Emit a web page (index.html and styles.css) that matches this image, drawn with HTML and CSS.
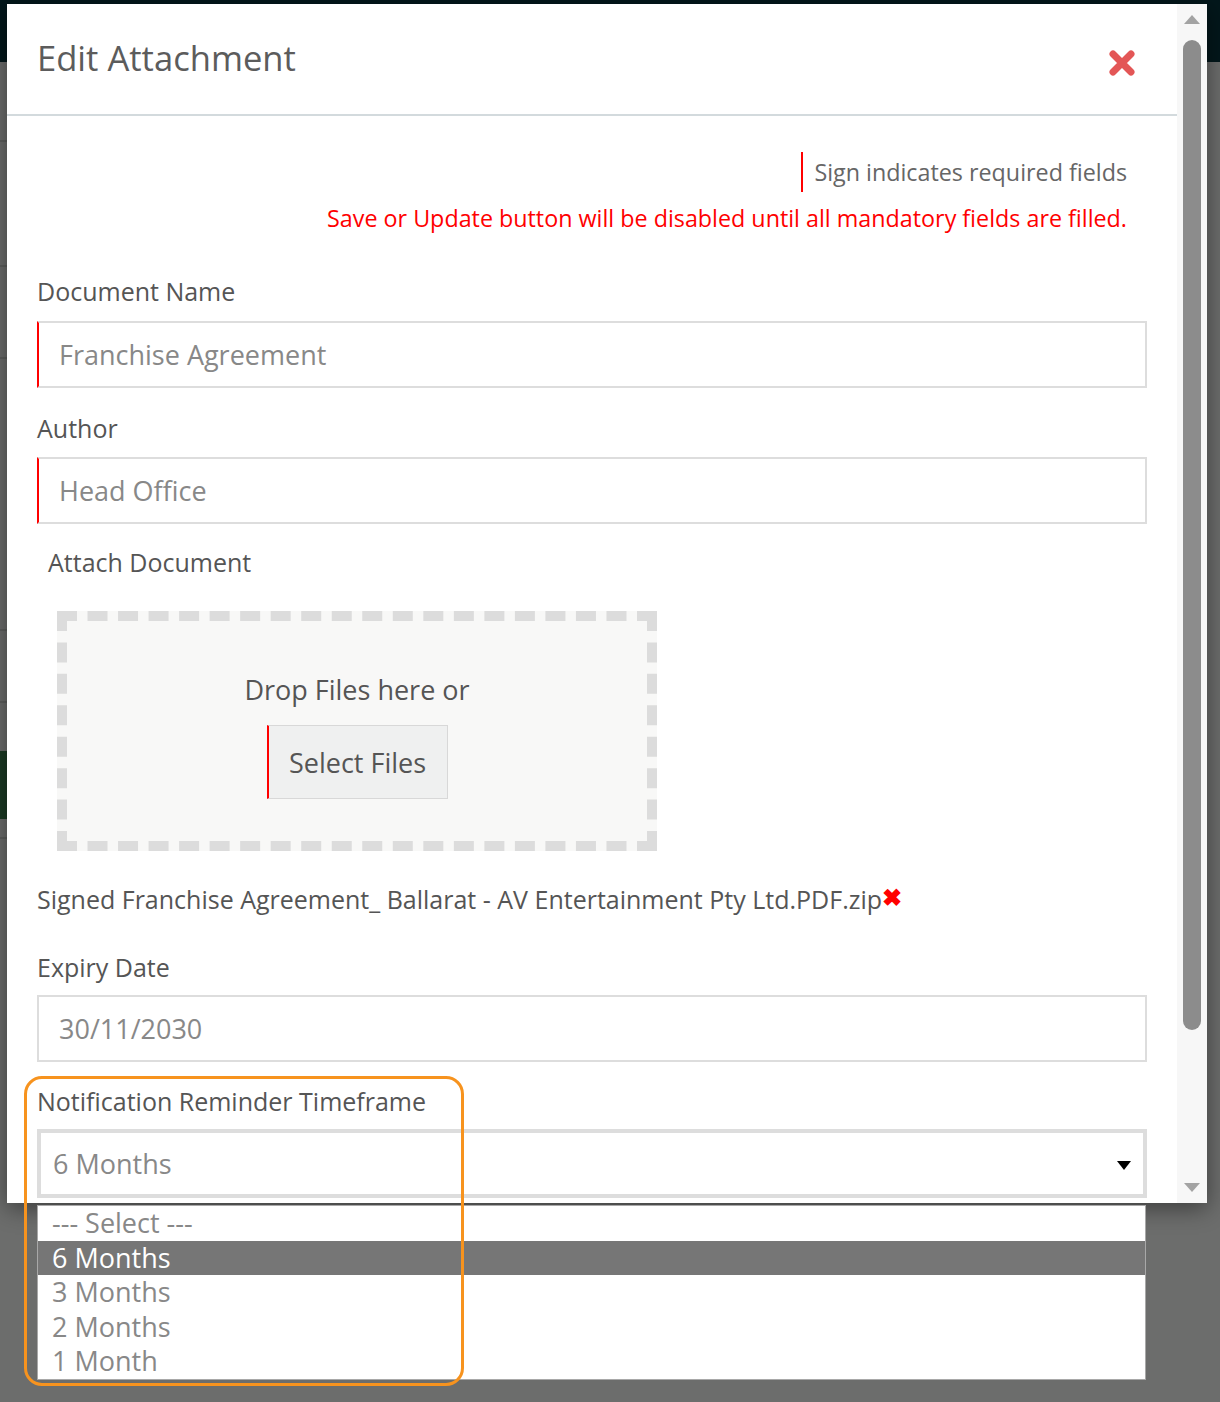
FILE: index.html
```html
<!DOCTYPE html>
<html>

<head>
    <title>Edit Attachment</title>
    <meta charset="utf-8">
    <meta name="viewport" content="width=device-width, initial-scale=1.0">
    <link rel="stylesheet" href="styles.css">
</head>

<body>

    <div class="topbar"></div>
    <div class="bagside">
        <div class="bag-linje l1"></div>
        <div class="bag-linje l2"></div>
        <div class="bag-linje l3"></div>
        <div class="bag-linje l4"></div>
        <div class="bag-linje l5"></div>
        <div class="bag-gron"></div>
        <div class="bag-linje l6"></div>
    </div>

    <div id="modal">
        <div class="modal-main">
            <header class="modal-head">
                <h2>Edit Attachment</h2>
                <button class="luk" aria-label="Close">
                    <svg width="28" height="28" viewBox="0 0 28 28">
                        <path d="M5 5 L23 23 M23 5 L5 23" stroke="#e35656" stroke-width="7" stroke-linecap="round" fill="none" />
                    </svg>
                </button>
            </header>

            <div class="modal-body">
                <div class="notes">
                    <p class="required">Sign indicates required fields</p>
                    <p class="warning">Save or Update button will be disabled until all mandatory fields are filled.</p>
                </div>

                <label class="label first">Document Name</label>
                <input class="input krav" type="text" value="Franchise Agreement">

                <label class="label">Author</label>
                <input class="input krav" type="text" value="Head Office">

                <label class="label attach">Attach Document</label>
                <div class="dropzone">
                    <p class="drop-tekst">Drop Files here or</p>
                    <button class="vaelg">Select Files</button>
                </div>

                <p class="filnavn">Signed Franchise Agreement_ Ballarat - AV Entertainment Pty Ltd.PDF.zip<span class="fjern">&#10006;</span></p>

                <label class="label expiry">Expiry Date</label>
                <input class="input dato" type="text" value="30/11/2030">

                <label class="label notif">Notification Reminder Timeframe</label>
                <div class="vaelger">
                    <span>6 Months</span>
                    <span class="pil"></span>
                </div>
            </div>
        </div>

        <div class="scroll">
            <div class="scroll-op"></div>
            <div class="scroll-thumb"></div>
            <div class="scroll-ned"></div>
        </div>
    </div>

    <ul class="liste">
        <li>--- Select ---</li>
        <li class="valgt">6 Months</li>
        <li>3 Months</li>
        <li>2 Months</li>
        <li>1 Month</li>
    </ul>

    <div class="markering"></div>

</body>

</html>
```

FILE: styles.css
```css
body {
    margin: 0;
    height: 1402px;
    position: relative;
    overflow: hidden;
    background-color: #6c6d6c;
    font-family: "Open Sans", sans-serif;
}

.topbar {
    height: 62px;
    background-color: #03171b;
}

.bagside {
    width: 60px;
}

.bag-linje {
    height: 2px;
    background-color: #5e5f5e;
}

.l1 {
    margin-top: 78px;
}

.l2 {
    margin-top: 123px;
}

.l3 {
    margin-top: 90px;
}

.l4 {
    margin-top: 270px;
}

.l5 {
    margin-top: 70px;
}

.bag-gron {
    height: 68px;
    margin-top: 48px;
    background-color: #1b3a24;
}

.l6 {
    margin-top: 18px;
}

/* modal */

#modal {
    position: absolute;
    left: 7px;
    top: 4px;
    width: 1200px;
    height: 1199px;
    display: flex;
    background-color: #ffffff;
    box-shadow: 0 5px 22px rgba(0, 0, 0, 0.45);
}

.modal-main {
    width: 1170px;
    overflow: hidden;
}

.modal-head {
    height: 110px;
    display: flex;
    align-items: center;
    justify-content: space-between;
    padding: 0 41px 0 30px;
    border-bottom: 2px solid #d3dadd;
}

.modal-head h2 {
    margin: 0 0 4px;
    font-size: 34.6px;
    font-weight: 400;
    color: #5c5c5c;
}

.luk {
    border: none;
    background: none;
    padding: 0;
    margin-top: 8px;
    width: 28px;
    height: 28px;
}

.luk svg {
    display: block;
}

.modal-body {
    padding: 0 30px;
}

.notes {
    text-align: right;
    padding-right: 20px;
    margin-top: 36px;
    font-size: 23.3px;
    line-height: 32px;
}

.notes p {
    margin: 0;
}

.required {
    display: inline-block;
    vertical-align: top;
    border-left: 2px solid #ff0000;
    padding-left: 11px;
    line-height: 40px;
    color: #666666;
}

.notes .warning {
    margin-top: 10px;
    color: #ff0000;
}

.label {
    display: block;
    font-size: 25px;
    line-height: 34px;
    color: #555555;
    margin: 23px 0 12px;
}

.label.first {
    margin-top: 40px;
    margin-bottom: 13px;
}

.input {
    display: block;
    width: 100%;
    height: 67px;
    box-sizing: border-box;
    border: 2px solid #dddddd;
    padding: 0 20px;
    font-family: "Open Sans", sans-serif;
    font-size: 27px;
    color: #888888;
    outline: none;
}

.input.krav {
    border-left-color: #ff0000;
}

.label.attach {
    margin: 21px 0 32px 11px;
}

.dropzone {
    margin-left: 20px;
    width: 600px;
    height: 240px;
    box-sizing: border-box;
    border: 10px dashed #dcdcdc;
    background-color: #f8f8f7;
    text-align: center;
}

.drop-tekst {
    margin: 52px 0 18px;
    font-size: 27px;
    line-height: 34px;
    color: #555555;
}

.vaelg {
    width: 181px;
    height: 74px;
    background-color: #eff0f0;
    border: 1px solid #d8d8d8;
    border-left: 2px solid #ff0000;
    font-family: "Open Sans", sans-serif;
    font-size: 27px;
    color: #555555;
}

.filnavn {
    margin: 29px 0 0;
    font-size: 25px;
    line-height: 34px;
    color: #555555;
}

.fjern {
    color: #ff0000;
    font-size: 24px;
    font-weight: bold;
    vertical-align: 3px;
}

.label.expiry {
    margin-top: 34px;
    margin-bottom: 11px;
}

.label.notif {
    margin-top: 22px;
    margin-bottom: 11px;
}

.vaelger {
    height: 69px;
    box-sizing: border-box;
    border: 4px solid #dddddd;
    padding: 0 12px 0 12px;
    display: flex;
    align-items: center;
    justify-content: space-between;
    font-size: 27px;
    color: #888888;
}

.pil {
    width: 0;
    height: 0;
    border-left: 7.5px solid transparent;
    border-right: 7.5px solid transparent;
    border-top: 9px solid #000000;
    margin-top: 3px;
}

/* scrollbar */

.scroll {
    width: 30px;
    display: flex;
    flex-direction: column;
    align-items: center;
    background-color: #f7f7f7;
}

.scroll-op {
    margin-top: 11px;
    width: 0;
    height: 0;
    border-left: 8px solid transparent;
    border-right: 8px solid transparent;
    border-bottom: 9px solid #a3a3a3;
}

.scroll-thumb {
    margin-top: 16px;
    width: 18px;
    height: 990px;
    border-radius: 9px;
    background-color: #8c8c8c;
}

.scroll-ned {
    margin-top: auto;
    margin-bottom: 11px;
    width: 0;
    height: 0;
    border-left: 8px solid transparent;
    border-right: 8px solid transparent;
    border-top: 9px solid #a3a3a3;
}

/* dropdown */

.liste {
    position: absolute;
    left: 37px;
    top: 1205px;
    width: 1109px;
    box-sizing: border-box;
    margin: 0;
    padding: 0;
    list-style: none;
    background-color: #ffffff;
    border: 1px solid #a8a8a8;
    font-size: 27px;
    color: #888888;
}

.liste li {
    height: 34.5px;
    line-height: 34.5px;
    padding-left: 14px;
}

.liste .valgt {
    background-color: #767676;
    color: #ffffff;
}

.markering {
    position: absolute;
    left: 24px;
    top: 1076px;
    width: 440px;
    height: 310px;
    box-sizing: border-box;
    border: 3px solid #f7931e;
    border-radius: 18px;
}
```
